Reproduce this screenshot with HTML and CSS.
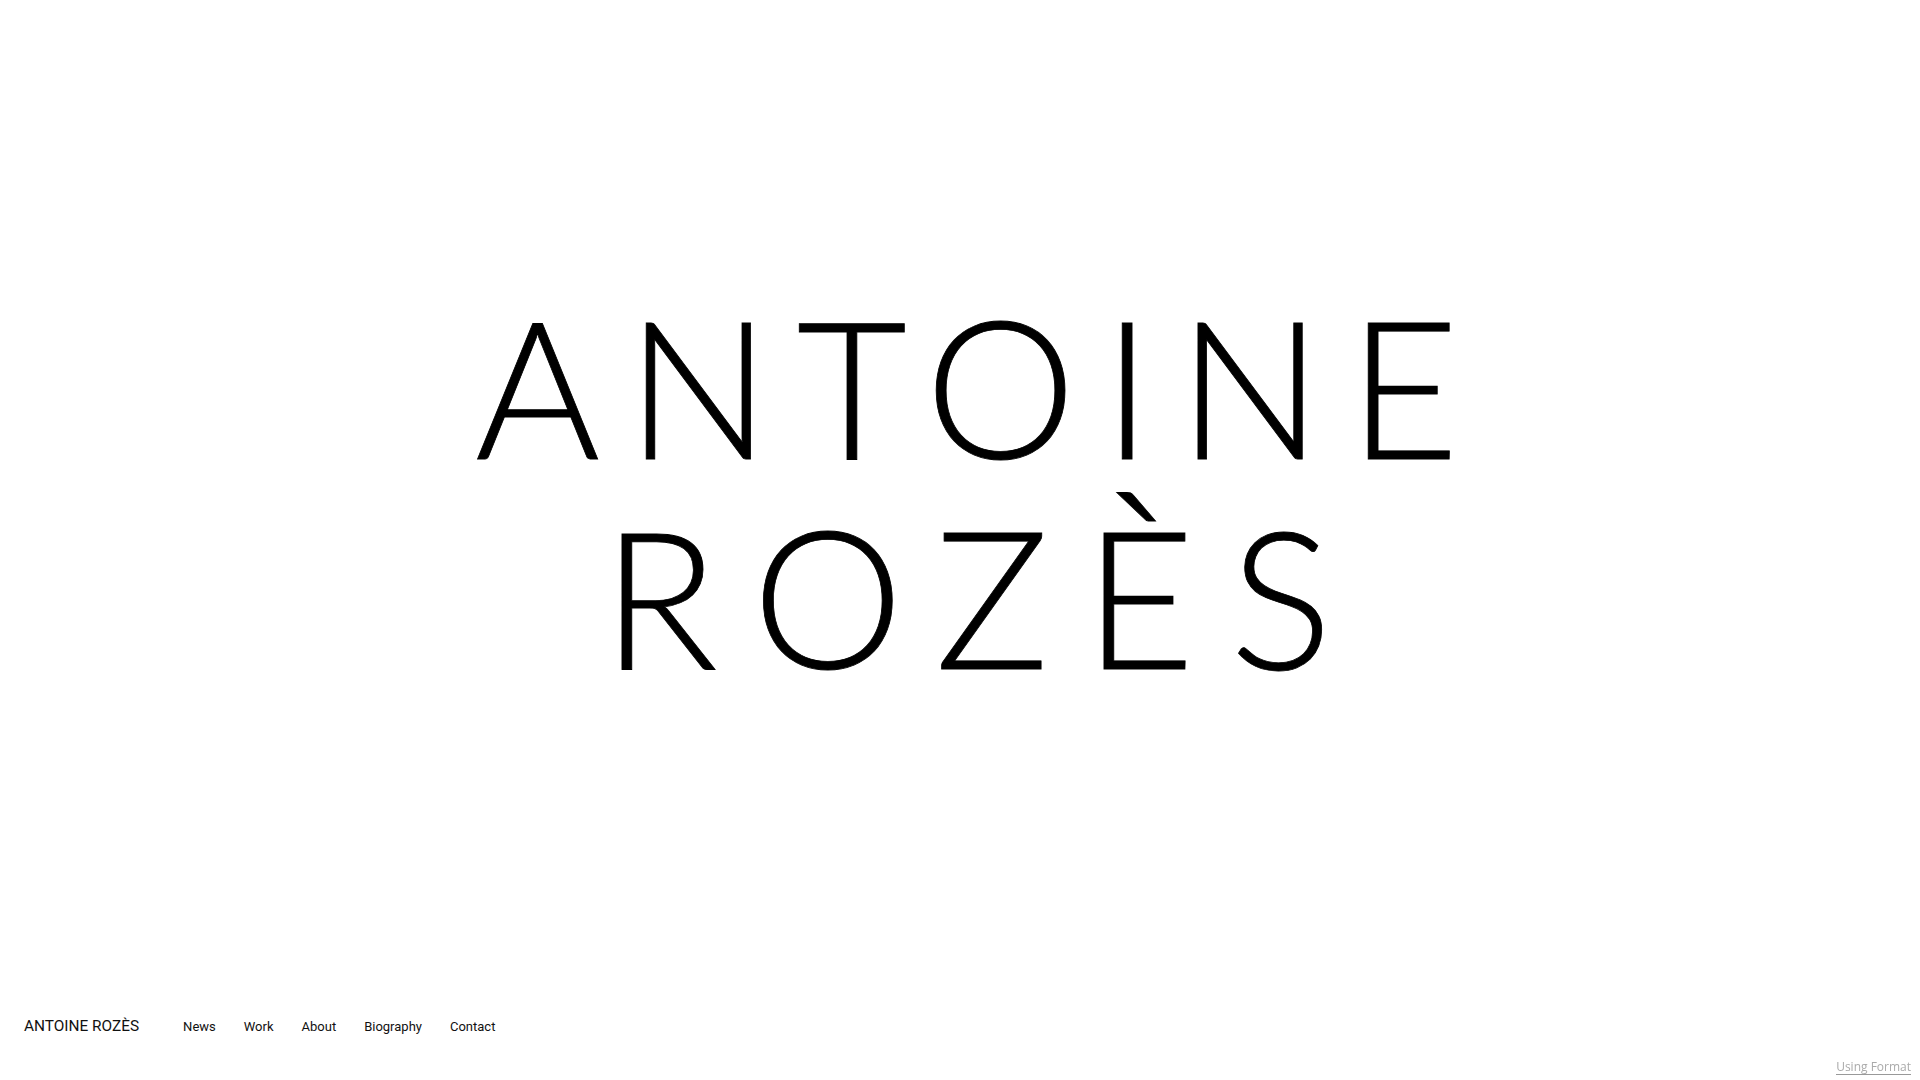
FILE: index.html
```html
<!DOCTYPE html>
<html lang="fr">
<head>
<meta charset="utf-8">
<title>Antoine Rozès</title>
<link rel="stylesheet" href="styles.css">
</head>
<body>
<div class="page">
  <main class="hero">
    <h1 class="title"><span class="line line1">ANTOINE</span><span class="line line2">ROZÈS</span></h1>
  </main>
  <footer class="footer">
    <a class="brand" href="#">ANTOINE ROZÈS</a>
    <nav class="nav">
      <a href="#">News</a>
      <a href="#">Work</a>
      <a href="#">About</a>
      <a href="#">Biography</a>
      <a href="#">Contact</a>
    </nav>
  </footer>
</div>
<a class="badge" href="#">Using Format</a>
</body>
</html>
```
FILE: styles.css
```css
html, body {
  margin: 0;
  padding: 0;
  background: #fff;
}
.page {
  height: 100vh;
  display: flex;
  flex-direction: column;
}
.hero {
  padding-top: 280px;
  padding-left: 14px;
  display: flex;
  justify-content: center;
}
.title {
  margin: 0;
  font-family: Lato, "Noto Sans", sans-serif;
  font-weight: 300;
  font-size: 191px;
  line-height: 210px;
  color: #000;
  text-align: center;
  -webkit-text-stroke: 0.8px #000;
}
.line {
  display: block;
}
.line1 {
  letter-spacing: 26px;
  margin-right: -26px;
}
.line2 {
  letter-spacing: 35px;
  margin-right: -35px;
}
.footer {
  margin-top: auto;
  display: flex;
  align-items: baseline;
  padding: 0 0 43px 24px;
  line-height: 20px;
}
.brand {
  font-family: Roboto, "Liberation Sans", sans-serif;
  font-size: 15.4px;
  color: #111;
  text-decoration: none;
  margin-right: 30px;
}
.nav {
  display: flex;
  align-items: baseline;
}
.nav a {
  font-family: Roboto, "Liberation Sans", sans-serif;
  font-size: 13px;
  color: #111;
  text-decoration: none;
  padding: 0 14px;
}
.badge {
  position: fixed;
  right: 9px;
  bottom: 5px;
  font-family: "Open Sans", "DejaVu Sans", sans-serif;
  font-size: 12px;
  color: #aaa;
  text-decoration: none;
  border-bottom: 1px solid #999;
  line-height: 15px;
}
```
